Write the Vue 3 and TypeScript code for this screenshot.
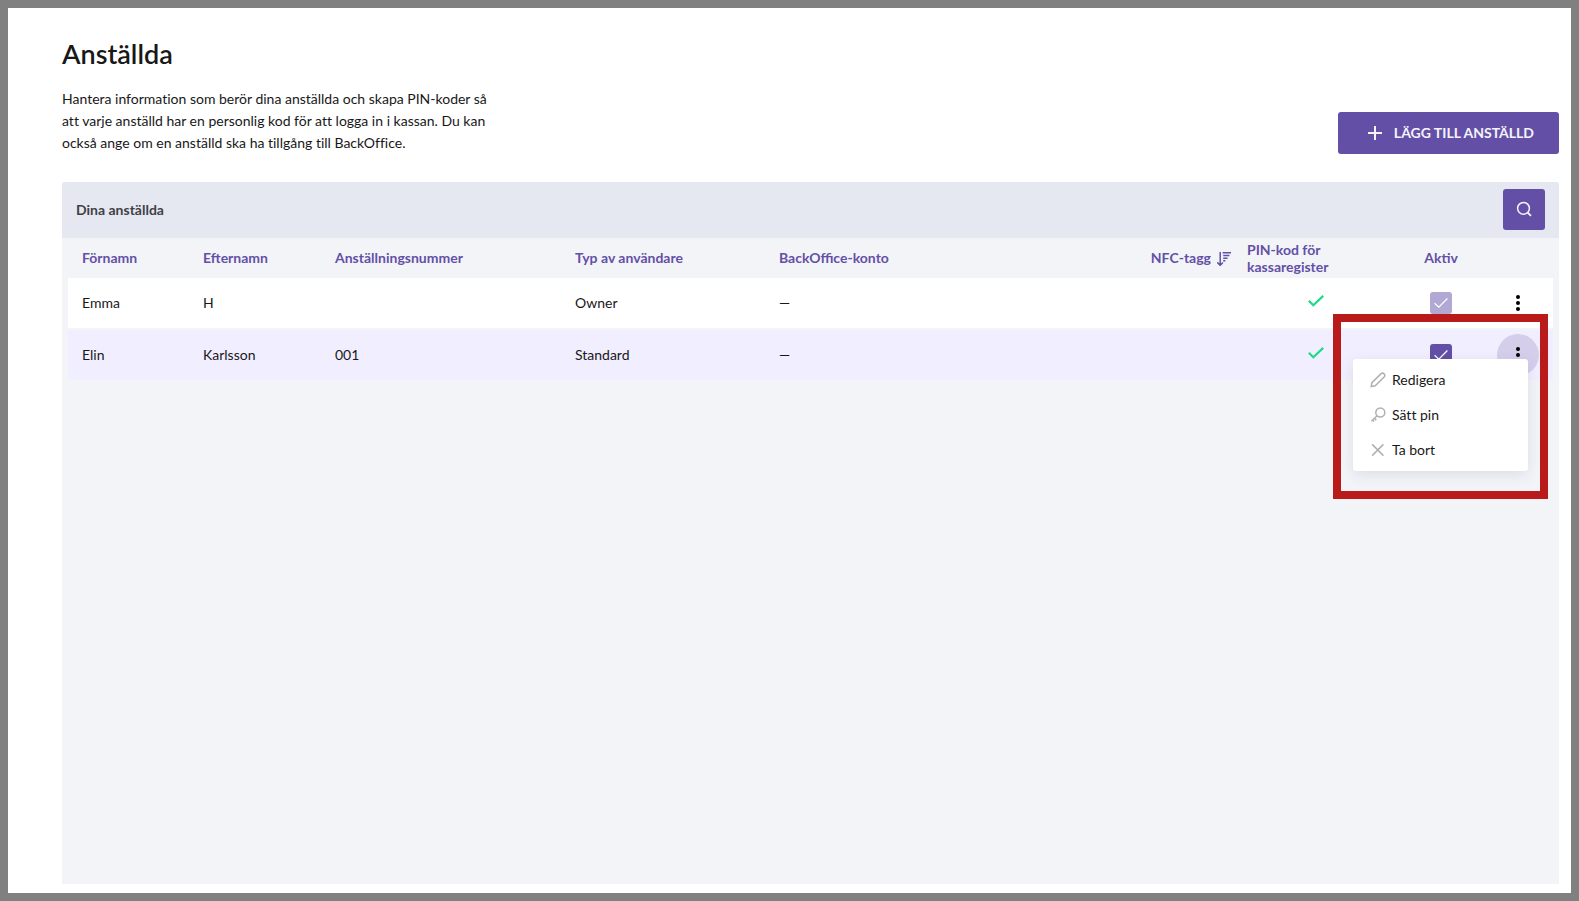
<script setup lang="ts">
import { ref } from 'vue'

interface Employee {
  id: number
  firstName: string
  lastName: string
  number: string
  role: string
  account: string
  hasPin: boolean
  active: boolean
  locked: boolean
}

const employees = ref<Employee[]>([
  { id: 1, firstName: 'Emma', lastName: 'H', number: '', role: 'Owner', account: '—', hasPin: true, active: true, locked: true },
  { id: 2, firstName: 'Elin', lastName: 'Karlsson', number: '001', role: 'Standard', account: '—', hasPin: true, active: true, locked: false },
])

const openMenu = ref<number | null>(2)

function toggleMenu(id: number) {
  openMenu.value = openMenu.value === id ? null : id
}
</script>

<template>
  <main class="page">
    <header class="intro">
      <div class="intro-text">
        <h1>Anställda</h1>
        <p>
          Hantera information som berör dina anställda och skapa PIN-koder så att varje anställd
          har en personlig kod för att logga in i kassan. Du kan också ange om en anställd ska ha
          tillgång till BackOffice.
        </p>
      </div>
      <button type="button" class="add">
        <svg width="14" height="14" viewBox="0 0 14 14" aria-hidden="true">
          <path d="M7 0v14M0 7h14" fill="none" stroke="currentColor" stroke-width="2" />
        </svg>
        LÄGG TILL ANSTÄLLD
      </button>
    </header>

    <section class="panel">
      <div class="panel-head">
        <h2>Dina anställda</h2>
        <button type="button" class="search" aria-label="Sök">
          <svg width="16" height="16" viewBox="0 0 16 16" aria-hidden="true">
            <circle cx="7.5" cy="7.3" r="5.9" fill="none" stroke="currentColor" stroke-width="1.5" />
            <path d="M11.6 11.5l3.4 3.3" fill="none" stroke="currentColor" stroke-width="1.8" />
          </svg>
        </button>
      </div>

      <div class="table-wrap">
        <table>
          <thead>
            <tr>
              <th class="c-first">Förnamn</th>
              <th class="c-last">Efternamn</th>
              <th class="c-number">Anställningsnummer</th>
              <th class="c-role">Typ av användare</th>
              <th>BackOffice-konto</th>
              <th class="c-nfc">
                <span class="sort">
                  NFC-tagg
                  <svg width="14" height="14" viewBox="0 0 14 14" aria-hidden="true">
                    <path d="M3.2 0v13M0.3 10.4l2.9 2.9 2.7-2.9" fill="none" stroke="currentColor" stroke-width="1.5" />
                    <path d="M5.6 0.7H14M6.2 3.5H12.4M6.2 6.3H10.6M6.2 8.8H8.4" fill="none" stroke="currentColor" stroke-width="1.4" />
                  </svg>
                </span>
              </th>
              <th class="c-pin">PIN-kod för<br />kassaregister</th>
              <th class="c-active">Aktiv</th>
              <th class="c-actions" aria-label="Åtgärder"></th>
            </tr>
          </thead>
          <tbody>
            <tr v-for="e in employees" :key="e.id" :class="{ selected: openMenu === e.id }">
              <td>{{ e.firstName }}</td>
              <td>{{ e.lastName }}</td>
              <td>{{ e.number }}</td>
              <td>{{ e.role }}</td>
              <td>{{ e.account }}</td>
              <td></td>
              <td class="c-pin">
                <div v-if="e.hasPin" class="pin">
                  <svg width="16" height="12" viewBox="0 0 16 12" role="img" aria-label="Ja">
                    <path d="M0.8 5.8L5.3 10.2 15.2 0.9" fill="none" stroke="#1edb87" stroke-width="2.2" />
                  </svg>
                </div>
              </td>
              <td class="c-active">
                <label class="check">
                  <input v-model="e.active" type="checkbox" :disabled="e.locked" aria-label="Aktiv" />
                  <svg v-if="e.active" width="14" height="10" viewBox="0 0 14 10" aria-hidden="true">
                    <path d="M0.6 5.2L4.8 9.2 13.4 0.5" fill="none" stroke="#fff" stroke-width="1.2" />
                  </svg>
                </label>
              </td>
              <td class="c-actions">
                <div class="actions">
                  <button
                    type="button"
                    class="dots"
                    :class="{ open: openMenu === e.id }"
                    aria-label="Fler val"
                    @click="toggleMenu(e.id)"
                  >
                    <svg width="4" height="16" viewBox="0 0 4 16" aria-hidden="true">
                      <circle cx="2" cy="2" r="2" />
                      <circle cx="2" cy="8" r="2" />
                      <circle cx="2" cy="14" r="2" />
                    </svg>
                  </button>
                  <div v-if="openMenu === e.id" class="highlight">
                    <div class="menu">
                      <button type="button">
                        <svg width="16" height="16" viewBox="0 0 16 16" aria-hidden="true">
                          <path d="M1.2 14.6L1.9 10.7 10.9 1.9Q12.6 0.4 14.1 1.9Q15.6 3.5 14.1 5.1L5.2 13.8Z" />
                        </svg>
                        Redigera
                      </button>
                      <button type="button">
                        <svg width="16" height="16" viewBox="0 0 16 16" aria-hidden="true">
                          <circle cx="10.3" cy="5.5" r="4.5" />
                          <path d="M7.1 8.7L1.4 14.2M4.4 11.3L6.3 13.2M2.4 12.8L4 14.6" />
                        </svg>
                        Sätt pin
                      </button>
                      <button type="button">
                        <svg width="16" height="16" viewBox="0 0 16 16" aria-hidden="true">
                          <path d="M2.2 2.4L13.4 13.6M13.4 2.4L2.2 13.6" />
                        </svg>
                        Ta bort
                      </button>
                    </div>
                  </div>
                </div>
              </td>
            </tr>
          </tbody>
        </table>
      </div>
    </section>
  </main>
</template>

<style>
body {
  background: #fff;
}
</style>

<style scoped>
.page {
  box-sizing: border-box;
  min-height: 100vh;
  display: flex;
  flex-direction: column;
  padding: 28px 12px 9px 54px;
  border: 8px solid #808080;
  background: #fff;
  color: #181818;
  font: 14px/22px Lato, sans-serif;
  font-variant-ligatures: none;
}

button {
  border: 0;
  padding: 0;
  font: inherit;
  font-variant-ligatures: none;
  color: inherit;
  cursor: pointer;
}

svg {
  display: block;
  flex: none;
}

.intro {
  display: flex;
  justify-content: space-between;
  align-items: flex-end;
  margin-bottom: 28px;
}

h1 {
  margin: 0 0 16px;
  font-size: 27px;
  line-height: 36px;
  font-weight: 600;
}

.intro p {
  margin: 0;
  max-width: 430px;
}

.add {
  display: flex;
  align-items: center;
  gap: 12px;
  height: 42px;
  padding: 0 25px 0 30px;
  border-radius: 3px;
  background: #6350a6;
  color: #f5f3fa;
  font-weight: 700;
  white-space: nowrap;
}

.panel {
  flex: 1;
  border-radius: 3px 3px 0 0;
  background: #f3f4f8;
}

.panel-head {
  display: flex;
  align-items: center;
  justify-content: space-between;
  height: 56px;
  padding: 0 14px;
  border-radius: 3px 3px 0 0;
  background: #e5e8f1;
}

h2 {
  margin: 0;
  font-size: 14px;
  font-weight: 700;
  color: #404045;
}

.search {
  display: grid;
  place-items: center;
  width: 42px;
  height: 41px;
  margin-bottom: 2px;
  border-radius: 3px;
  background: #6350a6;
  color: #f5f3fa;
}

.table-wrap {
  padding: 0 6px;
}

table {
  width: 100%;
  table-layout: fixed;
  border-collapse: separate;
  border-spacing: 0 2px;
}

th,
td {
  padding: 0 14px;
  text-align: left;
  vertical-align: middle;
}

th {
  box-sizing: border-box;
  height: 36px;
  padding-bottom: 2px;
  line-height: 17px;
  font-weight: 700;
  font-variant-ligatures: normal;
  color: #6350a6;
}

td {
  height: 50px;
  background: #fff;
}

.selected td {
  background: #f1eeff;
}

.c-first { width: 121px; }
.c-last { width: 132px; }
.c-number { width: 240px; }
.c-role { width: 204px; }

.sort {
  display: flex;
  align-items: center;
  justify-content: flex-end;
  gap: 6px;
}

.sort svg {
  margin-top: 4px;
}

.c-pin {
  width: 154px;
  padding: 0 14px 0 2px;
}

.pin {
  display: flex;
  justify-content: flex-end;
  width: 77px;
  padding-bottom: 4px;
}

.c-active {
  width: 84px;
  padding: 0;
  text-align: center;
}

th.c-active {
  padding-bottom: 2px;
}

.check {
  display: grid;
  place-items: center;
  width: 22px;
  height: 22px;
  margin: 0 auto;
}

.check input {
  grid-area: 1 / 1;
  appearance: none;
  width: 22px;
  height: 22px;
  margin: 0;
  border-radius: 3px;
  background: #6350a6;
}

.check input:disabled {
  background: #b1a8d3;
}

.check svg {
  grid-area: 1 / 1;
  pointer-events: none;
}

.c-actions {
  width: 70px;
  padding: 0;
}

.actions {
  position: relative;
  width: 42px;
  margin: 0 auto;
}

.dots {
  display: grid;
  place-items: center;
  width: 42px;
  height: 42px;
  border-radius: 50%;
  background: transparent;
}

.dots.open {
  background: #d5ceeb;
}

.highlight {
  position: absolute;
  top: -20px;
  right: -9px;
  padding: 37px 12px 20px;
  border: 8px solid #b91a1a;
}

.menu {
  display: flex;
  flex-direction: column;
  width: 175px;
  padding: 3px 0 4px;
  box-sizing: border-box;
  border-radius: 3px;
  background: #fff;
  box-shadow: 0 4px 14px rgba(40, 40, 60, 0.1);
}

.menu button {
  display: flex;
  align-items: center;
  gap: 6px;
  height: 35px;
  padding: 0 17px;
  background: transparent;
}

.menu svg {
  fill: none;
  stroke: #b0b0b0;
  stroke-width: 1.5;
}
</style>
